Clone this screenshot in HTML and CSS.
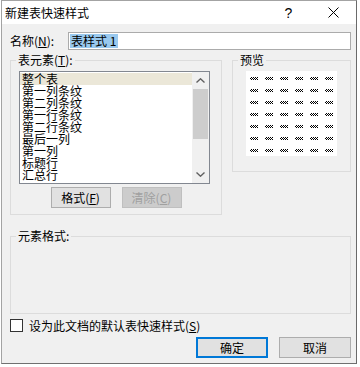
FILE: index.html
```html
<!doctype html>
<html lang="zh-CN">
<head>
    <meta charset="UTF-8">
    <title>新建表快速样式</title>
    <link rel="stylesheet" href="styles.css">
</head>
<body>

<div class="dialog">
    <div class="titlebar">
        <span class="title">新建表快速样式</span>
        <span class="tbtn">?</span>
        <span class="tbtn">
            <svg width="11" height="11" viewBox="0 0 11 11"><path d="M0.5 0.5L10.5 10.5M10.5 0.5L0.5 10.5" stroke="#000" stroke-width="1" fill="none"/></svg>
        </span>
    </div>

    <div class="name-row">
        <span class="name-label">名称(<u>N</u>):</span>
        <div class="name-input"><span class="sel">表样式 1</span></div>
    </div>

    <div class="middle">
        <fieldset class="group elements">
            <legend>表元素(<u>T</u>):</legend>
            <div class="listbox">
                <ul class="items">
                    <li class="on">整个表</li>
                    <li>第一列条纹</li>
                    <li>第二列条纹</li>
                    <li>第一行条纹</li>
                    <li>第二行条纹</li>
                    <li>最后一列</li>
                    <li>第一列</li>
                    <li>标题行</li>
                    <li>汇总行</li>
                </ul>
                <div class="scrollbar">
                    <span class="arrow">
                        <svg width="9" height="5" viewBox="0 0 9 5"><path d="M0.5 4.5L4.5 0.8L8.5 4.5" stroke="#606060" stroke-width="1.4" fill="none"/></svg>
                    </span>
                    <span class="thumb"></span>
                    <span class="track"></span>
                    <span class="arrow">
                        <svg width="9" height="5" viewBox="0 0 9 5"><path d="M0.5 0.5L4.5 4.2L8.5 0.5" stroke="#606060" stroke-width="1.4" fill="none"/></svg>
                    </span>
                </div>
            </div>
            <div class="btns">
                <button class="btn">格式(<u>F</u>)</button>
                <button class="btn" disabled>清除(<u>C</u>)</button>
            </div>
        </fieldset>

        <fieldset class="group preview">
            <legend>预览</legend>
            <div class="sheet" id="sheet"></div>
        </fieldset>
    </div>

    <fieldset class="group format">
        <legend>元素格式:</legend>
    </fieldset>

    <div class="check-row">
        <span class="checkbox"></span>
        <span class="check-label">设为此文档的默认表快速样式(<u>S</u>)</span>
    </div>

    <div class="footer">
        <button class="btn wide default">确定</button>
        <button class="btn wide">取消</button>
    </div>
</div>

<script>
    // 预览里 7 行 6 列的小格子
    const sheet = document.getElementById('sheet');
    for (let i = 0; i < 42; i++) {
        let cell = document.createElement('span');
        cell.className = 'dash';
        sheet.appendChild(cell);
    }
</script>
</body>
</html>
```

FILE: styles.css
```css
*{
    box-sizing: border-box;
}
body{
    margin: 0;
    background-color: #fff;
    font: 12px/14px "Noto Sans CJK SC", "Liberation Sans", sans-serif;
    color: #000;
}
ul{
    margin: 0;
    padding: 0;
    list-style: none;
}
u{
    text-decoration: underline;
}

.dialog{
    width: 356px;
    height: 364px;
    margin-left: 1px;
    border: 1px solid #a3a3a3;
    border-right-color: #6a6a6a;
    border-bottom-color: #707070;
    background-color: #f0f0f0;
    display: flex;
    flex-direction: column;
}

.titlebar{
    height: 23px;
    background-color: #fff;
    display: flex;
    align-items: center;
    padding-left: 3px;
}
.title{
    flex: 1;
    font-size: 12px;
}
.tbtn{
    width: 45px;
    height: 23px;
    display: flex;
    align-items: center;
    justify-content: center;
    font: 14px "Liberation Sans", sans-serif;
}

.name-row{
    display: flex;
    align-items: center;
    margin: 8px 0 0 8px;
    height: 18px;
}
.name-label{
    width: 58px;
}
.name-input{
    width: 283px;
    height: 18px;
    border: 1px solid #ababab;
    background-color: #fff;
    padding: 1px 0 0 1px;
}
.sel{
    display: inline-block;
    background-color: #99c9ef;
    padding: 0 2px 0 1px;
    line-height: 14px;
}

.group{
    margin: 0;
    padding: 0;
    min-width: 0;
    border: 1px solid #dcdcdc;
}
.group legend{
    margin-left: 5px;
    padding: 0 2px;
    line-height: 14px;
}

.middle{
    display: flex;
    align-items: flex-start;
    margin: 3px 0 0 8px;
}
.elements{
    width: 212px;
    height: 162px;
}
.preview{
    width: 119px;
    height: 119px;
    margin-left: 10px;
}

.listbox{
    width: 191px;
    height: 113px;
    margin: 4px 0 0 8px;
    border: 1px solid #828790;
    background-color: #fff;
    display: flex;
    overflow: hidden;
}
.items{
    flex: 1;
    padding-top: 1px;
}
.items li{
    height: 12px;
    line-height: 12px;
    padding-left: 2px;
    white-space: nowrap;
}
.items li.on{
    background-color: #ebe7d8;
}
.scrollbar{
    width: 17px;
    background-color: #f0f0f0;
    display: flex;
    flex-direction: column;
}
.arrow{
    height: 17px;
    display: flex;
    align-items: center;
    justify-content: center;
}
.thumb{
    height: 50px;
    margin: 0 1px;
    background-color: #cdcdcd;
}
.track{
    flex: 1;
}

.btns{
    display: flex;
    justify-content: center;
    gap: 11px;
    margin-top: 3px;
}
.btn{
    width: 60px;
    height: 21px;
    padding: 0;
    border: 1px solid #adadad;
    background-color: #e1e1e1;
    font: 12px/14px "Noto Sans CJK SC", "Liberation Sans", sans-serif;
    color: #000;
}
.btn:disabled{
    background-color: #cccccc;
    border-color: #bfbfbf;
    color: #a0a0a0;
}
.btn.wide{
    width: 72px;
}
.btn.default{
    border: 2px solid #0078d7;
}

.sheet{
    width: 91px;
    height: 85px;
    margin: 4px auto 0;
    background-color: #fff;
    display: grid;
    grid-template-columns: repeat(6, 15px);
    grid-auto-rows: 12px;
    padding: 6px 0 0 4px;
}
.dash{
    width: 8px;
    height: 3px;
    background-image: repeating-conic-gradient(#000 0 25%, #fff 0 50%);
    background-size: 2px 2px;
}

.format{
    width: 341px;
    height: 85px;
    margin: 14px 0 0 8px;
}

.check-row{
    display: flex;
    align-items: center;
    margin: 5px 0 0 8px;
    height: 13px;
}
.checkbox{
    width: 13px;
    height: 13px;
    border: 1px solid #333;
    background-color: #fff;
}
.check-label{
    margin-left: 6px;
}

.footer{
    display: flex;
    justify-content: flex-end;
    gap: 11px;
    margin: 5px 5px 0 0;
}
```
